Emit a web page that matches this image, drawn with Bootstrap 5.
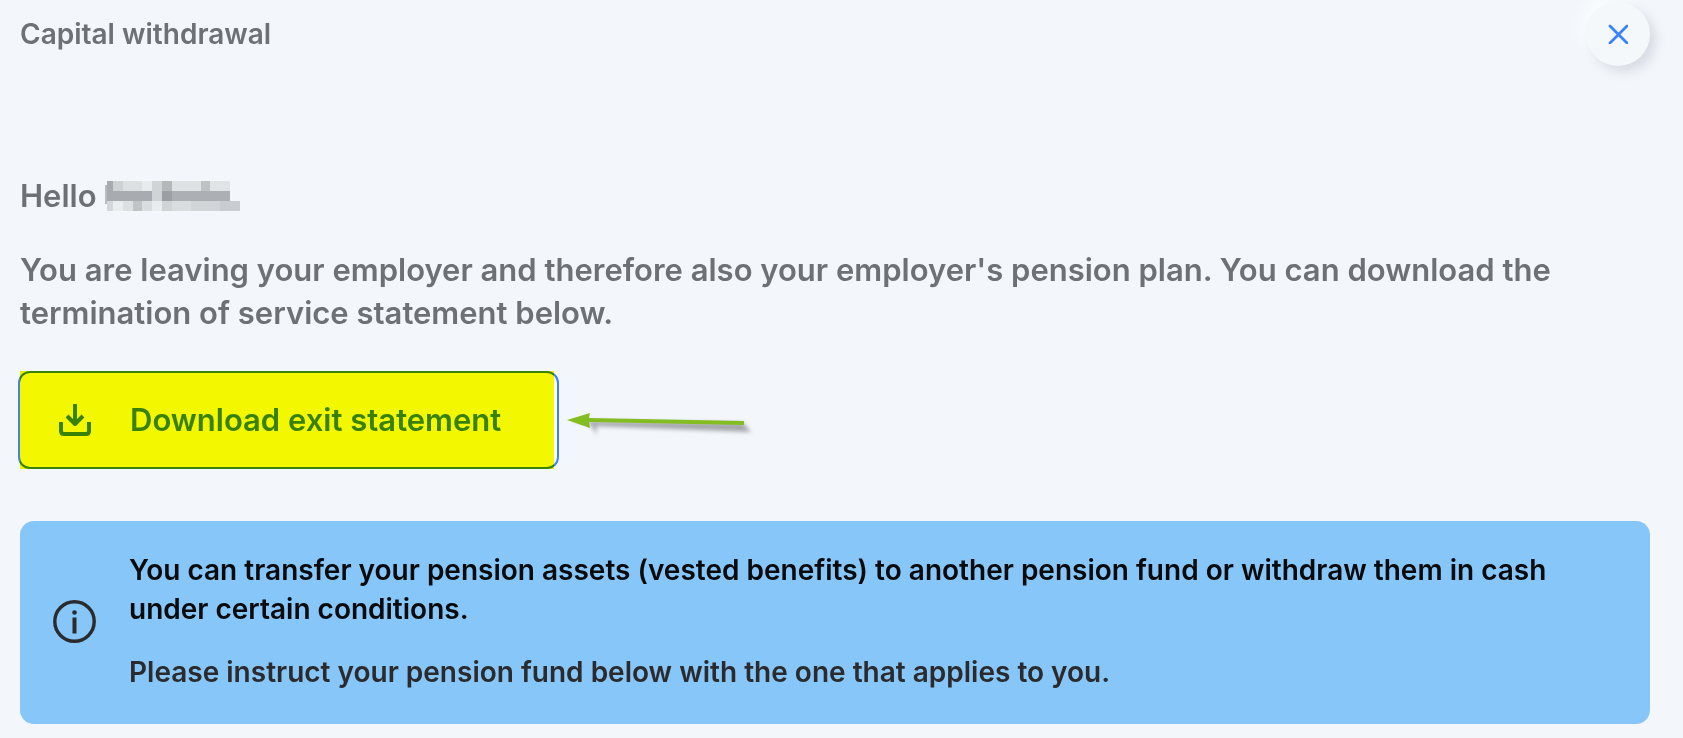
<!DOCTYPE html>
<html lang="en">
<head>
<meta charset="utf-8">
<meta name="viewport" content="width=device-width, initial-scale=1">
<title>Capital withdrawal</title>
<link href="https://cdn.jsdelivr.net/npm/bootstrap@5.3.0/dist/css/bootstrap.min.css" rel="stylesheet">
<style>
  body { background: #f3f7fb; color: #6d7075; font-family: Inter, "Open Sans", sans-serif; font-weight: 600; }
  .page { padding: 2px 33px 14px 20px; }
  .page-title { font-size: 28px; line-height: 40px; font-weight: 600; margin-top: 12px; }
  .close-btn { width: 64px; height: 64px; background: #f4f8fb; color: #3b82f6; border: 0;
    box-shadow: 6px 6px 12px #d9dae3, -6px -6px 12px #fafcfe; }
  .copy { font-size: 31px; line-height: 43px; }
  .greeting { margin-top: 108px; margin-bottom: 31px; }
  .intro { margin-bottom: 37px; }
  .download-row { gap: 8px; margin-left: -2px; margin-bottom: 52px; }
  .download-btn { position: relative; gap: 39px; height: 98px; padding: 0 56px 0 39px; background: #fcfdff;
    color: #3b84f6; border: 2px solid #3b84f6; border-radius: 12px; font-size: 31px; font-weight: 600; }
  .download-btn::after { content: ""; position: absolute; inset: -2px 3px -2px 0; background: #f6f900; mix-blend-mode: multiply; }
  .notice { background: #87c6f8; color: #2b2b2d; border-radius: 14px; padding: 30px 33px 32px; gap: 33px; font-size: 28px; line-height: 39px; }
  .notice-lead { color: #090a0c; margin-bottom: 24px; }
</style>
</head>
<body>
<main class="page">
  <header class="d-flex justify-content-between align-items-start">
    <h1 class="page-title mb-0">Capital withdrawal</h1>
    <button type="button" class="close-btn rounded-circle d-flex align-items-center justify-content-center flex-shrink-0 p-0" aria-label="Close">
      <svg width="20" height="20" viewBox="0 0 20 20" fill="none" stroke="currentColor" stroke-width="2.8" stroke-linecap="round" aria-hidden="true"><path d="M2 2l17 17M19 2l-17 17"/></svg>
    </button>
  </header>

  <p class="copy greeting d-flex align-items-center">
    <span>Hello</span>
    <!-- pixelated name -->
    <svg class="ms-1" width="140" height="30" viewBox="0 0 140 30" shape-rendering="crispEdges" role="img" aria-label="Hidden name">
      <g fill="#a8abaf"><path d="M4 4h2v19h-2z" fill="#b9bbbf"/><path d="M6 0h6v10h-6z"/><path d="M6 10h45v10h-45z"/><path d="M61 10h68v10h-68z" fill="#acafb3"/><path d="M61 10h10v10h-10z" fill="#9c9fa3"/></g>
      <path d="M12 0h10v10h-10z" fill="#ced2d5"/><path d="M22 0h19v10h-19z" fill="#dce0e3"/><path d="M41 0h10v10h-10z" fill="#e8ebee"/>
      <path d="M51 0h10v20h-10z" fill="#d1d4d7"/><path d="M61 0h10v10h-10z" fill="#b5b8bb"/><path d="M71 0h29v10h-29z" fill="#dfe2e5"/>
      <path d="M100 0h9v10h-9z" fill="#bfc2c5"/><path d="M109 0h20v10h-20z" fill="#e1e4e7"/>
      <path d="M6 20h6v10h-6z" fill="#d5d8db"/><path d="M12 20h10v10h-10z" fill="#eaedf0"/><path d="M22 20h10v10h-10z" fill="#dde0e3"/>
      <path d="M32 20h9v10h-9z" fill="#c1c4c7"/><path d="M41 20h10v10h-10z" fill="#dadde0"/><path d="M51 20h10v10h-10z" fill="#e9ecef"/>
      <path d="M61 20h10v10h-10z" fill="#d1d4d7"/><path d="M71 20h19v10h-19z" fill="#dadde0"/><path d="M90 20h29v10h-29z" fill="#d2d5d8"/><path d="M119 20h20v10h-20z" fill="#c9ccd0"/>
    </svg>
  </p>

  <p class="copy intro">You are leaving your employer and therefore also your employer's pension plan. You can download the termination of service statement below.</p>

  <div class="download-row d-flex align-items-center">
    <button type="button" class="download-btn d-flex align-items-center">
      <svg width="32" height="32" viewBox="0 0 32 32" fill="none" stroke="currentColor" stroke-width="4" stroke-linecap="butt" stroke-linejoin="round" aria-hidden="true"><path d="M16 0v20M8 12l8 8 8-8"/><path d="M2 18v9q0 3 3 3h22q3 0 3-3v-9"/></svg>
      <span>Download exit statement</span>
    </button>
    <svg width="192" height="40" viewBox="0 0 192 40" aria-hidden="true">
      <defs><filter id="soft" x="-10%" y="-50%" width="120%" height="200%"><feGaussianBlur stdDeviation="2"/></filter></defs>
      <path d="M4 21L23 24 30 35 29 26 184 32 176 23 22 21z" fill="#77787c" opacity=".65" filter="url(#soft)"/>
      <path d="M0 20L23 13l-1 5L177 21v4L22 22l1 6z" fill="#84bd22"/>
    </svg>
  </div>

  <section class="notice d-flex align-items-center">
    <svg class="flex-shrink-0" width="43" height="43" viewBox="0 0 43 43" aria-hidden="true"><circle cx="21.500" cy="21.500" r="19.700" fill="none" stroke="#2b2b2d" stroke-width="3.400"/><circle cx="21.500" cy="12.500" r="2.300" fill="#2b2b2d"/><path d="M21.500 17.500v16" stroke="#2b2b2d" stroke-width="4"/></svg>
    <div>
      <p class="notice-lead">You can transfer your pension assets (vested benefits) to another pension fund or withdraw them in cash under certain conditions.</p>
      <p class="mb-0">Please instruct your pension fund below with the one that applies to you.</p>
    </div>
  </section>
</main>
<script src="https://cdn.jsdelivr.net/npm/bootstrap@5.3.0/dist/js/bootstrap.bundle.min.js"></script>
</body>
</html>
